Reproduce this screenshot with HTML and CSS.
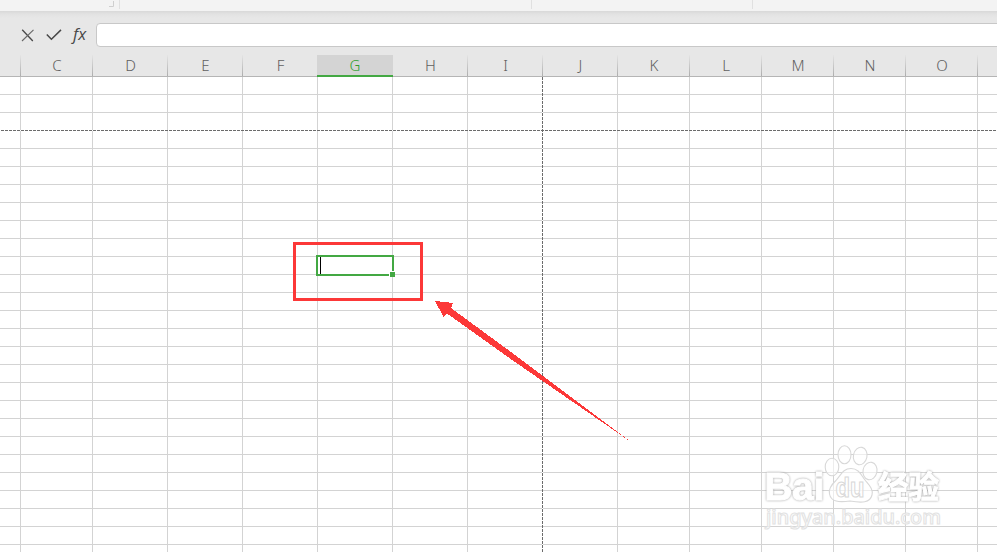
FILE: index.html
```html
<!DOCTYPE html>
<html lang="zh-CN">
<head>
    <meta charset="UTF-8">
    <meta name="viewport" content="width=device-width, initial-scale=1.0">
    <title>Spreadsheet</title>
    <link rel="stylesheet" href="styles.css">
</head>
<body>
    <div class="app">
        <div class="ribbon">
            <div class="ribbon-group first">
                <svg class="launcher" width="5" height="6" viewBox="0 0 5 6"><path d="M4.5 0V5.5H0" fill="none" stroke="#cfcfcf"/></svg>
            </div>
            <div class="ribbon-group second"></div>
            <div class="ribbon-group third"></div>
        </div>

        <div class="formula-bar">
            <svg class="icon" width="13" height="13" viewBox="0 0 13 13">
                <path d="M1.2 .8L11.8 12" stroke="#484848" stroke-width="1.3"/>
                <path d="M12.500 .8L1 12" stroke="#686868" stroke-width="1.1"/>
            </svg>
            <svg class="icon check" width="16" height="12" viewBox="0 0 16 12">
                <path d="M.8 5.5L5.4 10.2L15 .9" fill="none" stroke="#484848" stroke-width="1.5"/>
            </svg>
            <span class="fx">fx</span>
            <div class="formula-input"></div>
        </div>

        <div class="columns header">
            <span></span>
            <span>C</span>
            <span>D</span>
            <span>E</span>
            <span>F</span>
            <span class="active">G</span>
            <span>H</span>
            <span>I</span>
            <span>J</span>
            <span>K</span>
            <span>L</span>
            <span>M</span>
            <span>N</span>
            <span>O</span>
            <span></span>
        </div>

        <div class="sheet">
            <div class="columns cells">
                <i></i><i></i><i></i><i></i><i></i><i></i><i></i><i></i>
                <i></i><i></i><i></i><i></i><i></i><i></i><i></i>
            </div>
            <div class="page-break horizontal"></div>
            <div class="page-break vertical"></div>

            <div class="selection">
                <div class="caret"></div>
                <div class="handle"></div>
            </div>

            <div class="callout"></div>
            <svg class="arrow" width="196" height="142" viewBox="0 0 196 142" shape-rendering="crispEdges">
                <path d="M0 0L18 2L16 7L80 54L196 141L80 61L12 12.500L8.500 16Z" fill="#fc3838"/>
            </svg>

            <!-- watermark -->
            <svg class="watermark" width="190" height="90" viewBox="760 442 190 90">
                <g class="paw">
                    <ellipse cx="832" cy="467" rx="6.8" ry="8.8"/>
                    <ellipse cx="844.5" cy="454.8" rx="6.5" ry="9"/>
                    <ellipse cx="860.2" cy="456" rx="6.8" ry="8.8" transform="rotate(12 860.2 456)"/>
                    <ellipse cx="870" cy="471" rx="7" ry="8.8" transform="rotate(12 870 471)"/>
                    <path d="M851 468.500C843 468.500 841 475 836 480.500C831 485 828.500 489 829.500 494C831 502 839 502.500 850 501C862 503 870 503 872 495C873.500 489 869 485 865 480C861 475 859 468.500 851 468.500Z"/>
                    <text class="du" x="835.500" y="497" textLength="29" lengthAdjust="spacingAndGlyphs">du</text>
                    <text class="url" x="766" y="524" textLength="175" lengthAdjust="spacingAndGlyphs">jingyan.baidu.com</text>
                </g>
                <g class="face">
                    <text class="bai" x="764.500" y="500" textLength="60" lengthAdjust="spacingAndGlyphs">Bai</text>
                    <text class="cn" x="878" y="498" textLength="61" lengthAdjust="spacingAndGlyphs">经验</text>
                </g>
            </svg>
        </div>
    </div>
</body>
</html>
```

FILE: styles.css
```css
:root {
    --chrome: #e7e7e7;
    --grid-line: #d3d3d3;
    --green: #43a843;
    --red: #fc3838;
    --break: #6b6b6b;
}

* {
    margin: 0;
    padding: 0;
    box-sizing: border-box;
}

body {
    background-color: #fff;
    font-family: 'Open Sans', 'Noto Sans', sans-serif;
    overflow: hidden;
}

.app {
    display: flex;
    flex-direction: column;
    height: 552px;
}

.ribbon {
    display: flex;
    height: 11px;
    padding-bottom: 2px;
    background-color: #f3f3f3;
}

.ribbon-group {
    border-right: 1px solid #e0e0e0;
}

.ribbon-group.first {
    display: flex;
    justify-content: flex-end;
    width: 120px;
    padding: 1px 5px 0 0;
}

.ribbon-group.second {
    width: 412px;
}

.ribbon-group.third {
    width: 221px;
}

.formula-bar {
    display: flex;
    align-items: center;
    height: 44px;
    padding: 4px 0 0 21px;
    background: linear-gradient(#d8d8d8, #e2e2e2 3px, var(--chrome) 7px);
}

.icon {
    display: block;
}

.check {
    margin: 0 0 1px 12px;
}

.fx {
    width: 24px;
    margin-top: -2px;
    margin-left: 11px;
    color: #484848;
    font-size: 16.5px;
    font-style: italic;
    line-height: 20px;
}

.formula-input {
    flex: 1;
    height: 24px;
    margin-right: -8px;
    margin-left: -1px;
    background-color: #fff;
    border: 1px solid #c8c8c8;
    border-radius: 4px;
}

.columns {
    display: grid;
    grid-template-columns: 21px 72px repeat(7, 75px) repeat(5, 72px) 1fr;
}

.header {
    height: 22px;
    background-color: var(--chrome);
    border-bottom: 1px solid #b5b5b5;
}

.header span {
    height: 21px;
    color: #606060;
    font-family: 'Noto Sans', 'Open Sans', sans-serif;
    font-size: 15px;
    font-weight: 300;
    line-height: 21px;
    text-align: center;
    background: linear-gradient(#e4e4e4, #adadad) right / 1px 100% no-repeat;
}

.header span:last-child {
    background: none;
}

.header .active {
    height: 22px;
    margin-left: -1px;
    color: #2f9f2f;
    background: #d4d4d4;
    border-bottom: 2px solid var(--green);
}

.sheet {
    position: relative;
    flex: 1;
    overflow: hidden;
}

.cells {
    height: 100%;
    background: repeating-linear-gradient(#fff 0 17px, var(--grid-line) 17px 18px);
}

.cells i {
    border-right: 1px solid var(--grid-line);
}

.cells i:last-child {
    border-right: none;
}

.page-break {
    position: absolute;
}

.page-break.horizontal {
    top: 53px;
    left: 0;
    width: 100%;
    height: 1px;
    background: repeating-linear-gradient(90deg, #fff 0 1px, var(--break) 1px 4px);
}

.page-break.vertical {
    top: 0;
    left: 542px;
    width: 1px;
    height: 100%;
    background: repeating-linear-gradient(var(--break) 0 3px, #fff 3px 4px);
}

.selection {
    position: absolute;
    top: 178px;
    left: 316px;
    width: 78px;
    height: 21px;
    border: 2px solid var(--green);
}

.caret {
    position: absolute;
    top: 0;
    left: 2px;
    width: 1px;
    height: 17px;
    background-color: #000;
}

.handle {
    position: absolute;
    right: -3px;
    bottom: -3px;
    width: 6px;
    height: 6px;
    background-color: var(--green);
    border-top: 1px solid #fff;
    border-left: 1px solid #fff;
}

.callout {
    position: absolute;
    top: 165px;
    left: 293px;
    width: 130px;
    height: 59px;
    border: 3px solid var(--red);
}

.arrow {
    position: absolute;
    top: 224px;
    left: 435px;
}

.watermark {
    position: absolute;
    top: 365px;
    left: 760px;
    font-family: 'Liberation Sans', sans-serif;
}

.paw {
    fill: rgba(255, 255, 255, 0.6);
    stroke: #d8d8d8;
    stroke-width: 1.1;
}

.face {
    fill: #fff;
    stroke: #fff;
    stroke-width: 1;
    stroke-linejoin: round;
    filter: drop-shadow(0 0 0.8px #a0a0a0);
}

.bai {
    font-size: 39px;
    font-weight: bold;
}

.du {
    font-size: 27px;
    font-weight: bold;
}

.cn {
    font-family: 'Noto Sans CJK SC', sans-serif;
    font-size: 31px;
    font-weight: bold;
}

.url {
    font-family: 'Noto Sans', sans-serif;
    font-size: 20px;
    font-weight: 500;
    stroke: #e2e2e2;
}
```
